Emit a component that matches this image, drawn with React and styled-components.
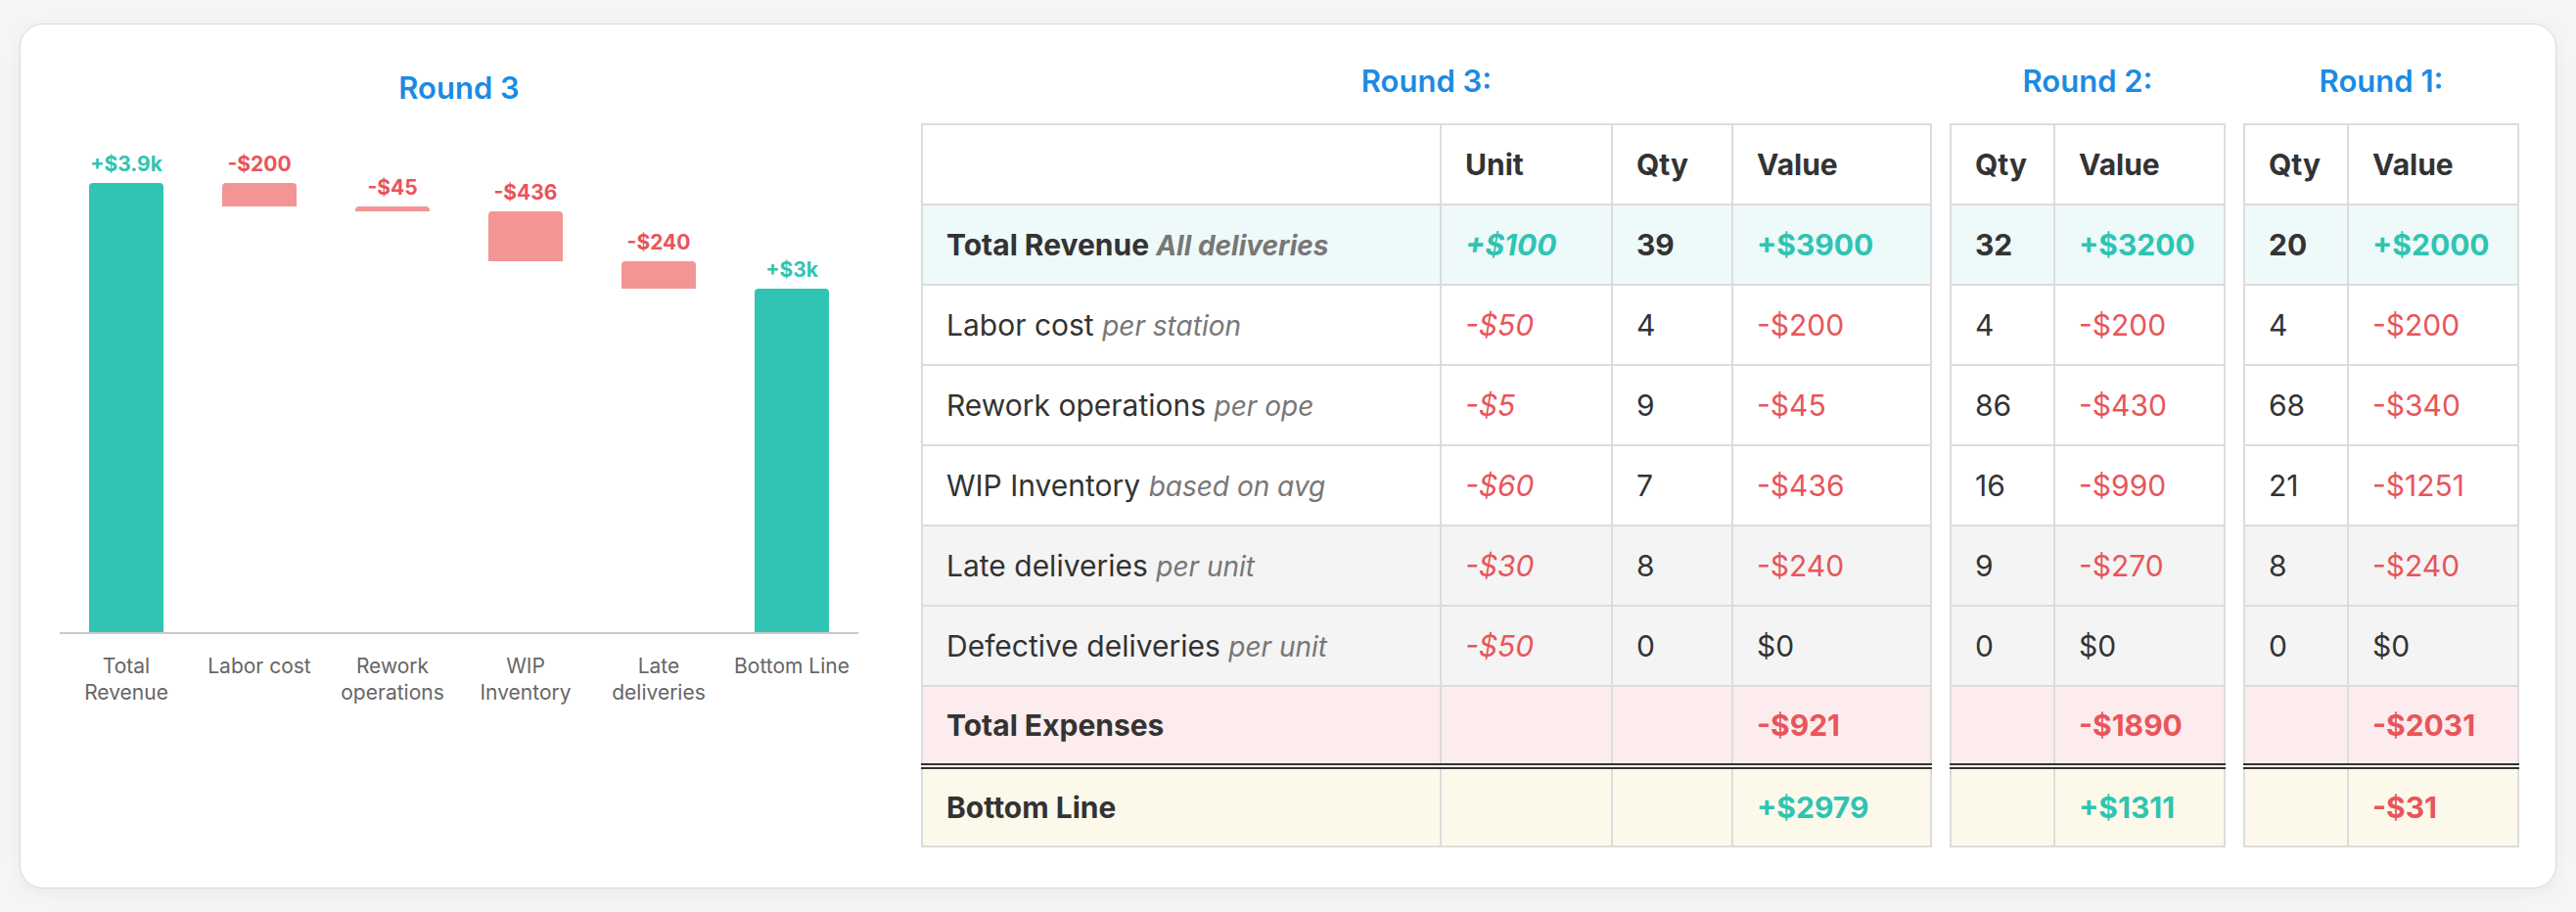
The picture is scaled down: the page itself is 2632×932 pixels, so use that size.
import React from "react";
import styled, { createGlobalStyle } from "styled-components";

const TEAL = "#2fc4b2";
const RED = "#e9555a";
const DARK = "#333333";

const GlobalStyle = createGlobalStyle`
  html, body { margin: 0; padding: 0; background: #f5f5f5; }
  body { font-family: Inter, "Noto Sans", "Liberation Sans", sans-serif; color: ${DARK}; }
  * { box-sizing: border-box; }
`;

const Page = styled.div`
  padding: 24px 20px;
`;

const Card = styled.div`
  display: flex;
  align-items: flex-start;
  gap: 64px;
  background: #fff;
  border: 1px solid #dadada;
  border-radius: 24px;
  box-shadow: 0 4px 18px rgba(0, 0, 0, 0.05);
  padding: 40px 40px 41px 40px;
`;

const ChartSection = styled.section`
  width: 816px;
  flex: none;
  padding-top: 7px;
  display: flex;
  flex-direction: column;
`;

const Title = styled.h2`
  margin: 0;
  font-size: 31px;
  line-height: 36px;
  font-weight: 600;
  color: #1b8be2;
  text-align: center;
`;

const Plot = styled.div`
  display: flex;
  height: 540px;
  border-bottom: 2px solid #c9c9c9;
`;

const Slot = styled.div`
  width: 136px;
  display: flex;
  flex-direction: column;
  justify-content: flex-end;
  align-items: center;
`;

const BarValue = styled.div`
  font-size: 21px;
  line-height: 24px;
  font-weight: 700;
  margin-bottom: 7px;
  color: ${(p) => (p.$kind === "pos" ? TEAL : RED)};
`;

const Bar = styled.div`
  width: 76px;
  border-radius: 4px 4px 0 0;
  background: ${(p) => (p.$kind === "pos" ? "#31c4b5" : "#f29593")};
`;

const AxisLabels = styled.div`
  display: flex;
  padding-top: 19px;
`;

const AxisLabel = styled.div`
  width: 136px;
  display: flex;
  justify-content: center;
  span {
    max-width: 128px;
    text-align: center;
    font-size: 21px;
    line-height: 27px;
    color: #666;
  }
`;

const Tables = styled.div`
  display: flex;
  gap: 18px;
`;

const RoundBlock = styled.div`
  display: flex;
  flex-direction: column;
`;

const RoundTitle = styled(Title)`
  margin-bottom: 25px;
`;

const Table = styled.table`
  border-collapse: collapse;
  table-layout: fixed;
  width: ${(p) => p.$width}px;
  font-size: 30px;
`;

const ROW_BG = {
  head: "#ffffff",
  revenue: "#eef9f9",
  plain: "#ffffff",
  grey: "#f4f4f4",
  expense: "#fdeced",
  bottom: "#fdf9ea",
};

const Row = styled.tr`
  background: ${(p) => ROW_BG[p.$bg]};
`;

const HeadCell = styled.th`
  height: 82px;
  padding: 0 24px;
  border: 2px solid #dcdcdc;
  text-align: left;
  font-weight: 700;
  color: ${DARK};
  white-space: nowrap;
`;

const Cell = styled.td`
  height: 82px;
  padding: 0 24px;
  border: 2px solid #dcdcdc;
  border-top: ${(p) => (p.$double ? "6px double #333" : "2px solid #dcdcdc")};
  white-space: nowrap;
  font-weight: ${(p) => (p.$bold ? 700 : 400)};
  font-style: ${(p) => (p.$italic ? "italic" : "normal")};
  color: ${(p) => (p.$tone === "pos" ? TEAL : p.$tone === "neg" ? RED : DARK)};
`;

const Sub = styled.span`
  font-size: 28px;
  font-style: italic;
  color: #777;
  font-weight: inherit;
`;

const SCALE = 459 / 3900;

const bars = [
  { label: "Total Revenue", value: "+$3.9k", kind: "pos", from: 0, to: 3900 },
  { label: "Labor cost", value: "-$200", kind: "neg", from: 3700, to: 3900 },
  { label: "Rework operations", value: "-$45", kind: "neg", from: 3655, to: 3700 },
  { label: "WIP Inventory", value: "-$436", kind: "neg", from: 3219, to: 3655 },
  { label: "Late deliveries", value: "-$240", kind: "neg", from: 2979, to: 3219 },
  { label: "Bottom Line", value: "+$3k", kind: "pos", from: 0, to: 2979 },
];

const labels = [
  { name: "Total Revenue", sub: "All deliveries", bg: "revenue" },
  { name: "Labor cost", sub: "per station", bg: "plain" },
  { name: "Rework operations", sub: "per ope", bg: "plain" },
  { name: "WIP Inventory", sub: "based on avg", bg: "plain" },
  { name: "Late deliveries", sub: "per unit", bg: "grey" },
  { name: "Defective deliveries", sub: "per unit", bg: "grey" },
  { name: "Total Expenses", sub: null, bg: "expense" },
  { name: "Bottom Line", sub: null, bg: "bottom" },
];

const units = ["+$100", "-$50", "-$5", "-$60", "-$30", "-$50", "", ""];

const rounds = [
  {
    title: "Round 3:",
    qty: ["39", "4", "9", "7", "8", "0", "", ""],
    val: ["+$3900", "-$200", "-$45", "-$436", "-$240", "$0", "-$921", "+$2979"],
  },
  {
    title: "Round 2:",
    qty: ["32", "4", "86", "16", "9", "0", "", ""],
    val: ["+$3200", "-$200", "-$430", "-$990", "-$270", "$0", "-$1890", "+$1311"],
  },
  {
    title: "Round 1:",
    qty: ["20", "4", "68", "21", "8", "0", "", ""],
    val: ["+$2000", "-$200", "-$340", "-$1251", "-$240", "$0", "-$2031", "-$31"],
  },
];

const toneOf = (v) => (v.startsWith("+") ? "pos" : v.startsWith("-") ? "neg" : "plain");
const isBoldRow = (i) => i === 0 || i === 6 || i === 7;

function Chart() {
  return (
    <ChartSection>
      <Title>Round 3</Title>
      <Plot>
        {bars.map((b) => (
          <Slot key={b.label} style={{ paddingBottom: b.from * SCALE }}>
            <BarValue $kind={b.kind}>{b.value}</BarValue>
            <Bar $kind={b.kind} style={{ height: (b.to - b.from) * SCALE }} />
          </Slot>
        ))}
      </Plot>
      <AxisLabels>
        {bars.map((b) => (
          <AxisLabel key={b.label}>
            <span>{b.label}</span>
          </AxisLabel>
        ))}
      </AxisLabels>
    </ChartSection>
  );
}

function RoundTable({ round, full }) {
  const cols = full ? [530, 175, 123, 203] : [106, 174];
  const width = cols.reduce((a, b) => a + b, 0);
  return (
    <RoundBlock>
      <RoundTitle as="h3">{round.title}</RoundTitle>
      <Table $width={width}>
        <colgroup>
          {cols.map((w, i) => (
            <col key={i} style={{ width: w }} />
          ))}
        </colgroup>
        <thead>
          <Row $bg="head">
            {full && <HeadCell />}
            {full && <HeadCell>Unit</HeadCell>}
            <HeadCell>Qty</HeadCell>
            <HeadCell>Value</HeadCell>
          </Row>
        </thead>
        <tbody>
          {labels.map((l, i) => {
            const bold = isBoldRow(i);
            const dbl = i === 7;
            return (
              <Row key={l.name} $bg={l.bg}>
                {full && (
                  <Cell $bold={bold} $double={dbl}>
                    {l.name}
                    {l.sub && (
                      <>
                        {" "}
                        <Sub>{l.sub}</Sub>
                      </>
                    )}
                  </Cell>
                )}
                {full && (
                  <Cell $italic $bold={bold} $double={dbl} $tone={toneOf(units[i])}>
                    {units[i]}
                  </Cell>
                )}
                <Cell $bold={bold} $double={dbl}>
                  {round.qty[i]}
                </Cell>
                <Cell $bold={bold} $double={dbl} $tone={toneOf(round.val[i])}>
                  {round.val[i]}
                </Cell>
              </Row>
            );
          })}
        </tbody>
      </Table>
    </RoundBlock>
  );
}

export default function App() {
  return (
    <>
      <GlobalStyle />
      <Page>
        <Card>
          <Chart />
          <Tables>
            {rounds.map((r, i) => (
              <RoundTable key={r.title} round={r} full={i === 0} />
            ))}
          </Tables>
        </Card>
      </Page>
    </>
  );
}
